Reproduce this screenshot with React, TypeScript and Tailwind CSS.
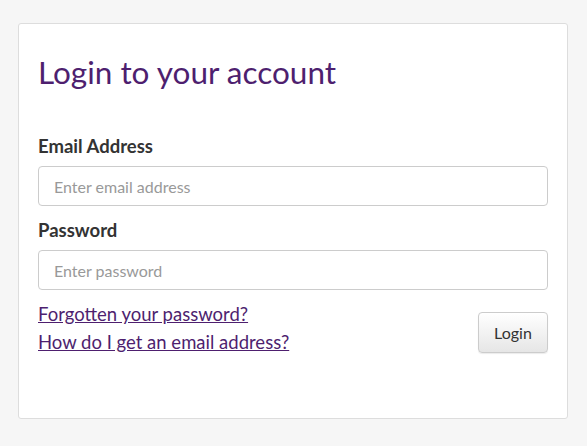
import React from 'react';

const App = () => {
  const label = "block text-[18.5px] font-bold text-[#333333] leading-[24px]";
  const input = "block w-full h-[40px] px-[15px] bg-white border border-[#cccccc] rounded-[4px] text-[16px] text-[#333] placeholder:text-[#999999] outline-none";

  return (
    <div className="min-h-[446px] bg-[#f6f6f6] pt-[23px] pl-[18px] pr-[19px] font-['Lato','Liberation_Sans',sans-serif]">
      <div className="w-[550px] h-[396px] bg-white border border-[#dddddd] rounded-[3px] px-[19px]">
        <h1 className="mt-[28px] text-[31.5px] leading-[40px] text-[#4e1f6f] font-normal">Login to your account</h1>

        <form className="mt-[42px] flex flex-col" onSubmit={e => e.preventDefault()}>
          <label className={label}>Email Address</label>
          <input type="email" placeholder="Enter email address" className={`${input} mt-[8px]`} />

          <label className={`${label} mt-[12px]`}>Password</label>
          <input type="password" placeholder="Enter password" className={`${input} mt-[8px]`} />

          <div className="mt-[14px] flex items-start justify-between">
            <div className="flex flex-col gap-[8px] text-[18.5px] leading-[20px] text-[#4e1f6f]">
              <a href="#" className="underline">Forgotten your password?</a>
              <a href="#" className="underline">How do I get an email address?</a>
            </div>
            <button
              type="submit"
              className="mt-[8px] w-[70px] h-[41px] rounded-[4px] border border-[#cccccc] bg-gradient-to-b from-white to-[#e6e6e6] text-[16px] text-[#333] shadow-[0_1px_1px_rgba(0,0,0,0.08)]"
            >
              Login
            </button>
          </div>
        </form>
      </div>
    </div>
  );
};

export default App;
